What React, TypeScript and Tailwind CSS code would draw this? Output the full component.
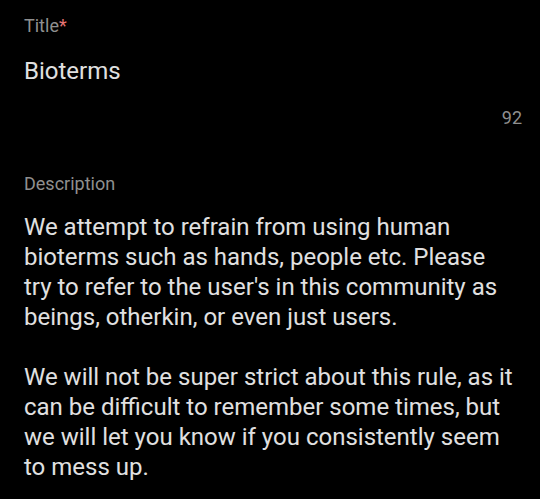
export default function App() {
  return (
    <main
      className="min-h-screen w-full bg-black pl-6 pr-[18px] pt-[14px]"
      style={{ fontFamily: "Roboto, 'Noto Sans', sans-serif" }}
    >
      <section>
        <p className="text-[18px] leading-6 text-[#8f8f8f]">
          Title<span className="text-[#e57373]">*</span>
        </p>
        <p className="mt-[19px] text-[24px] leading-[28px] text-[#e0e0e0]">Bioterms</p>
        <p className="mt-[21px] text-right text-[18px] leading-6 text-[#8f8f8f]">92</p>
      </section>

      <section className="mt-[42px]">
        <p className="text-[18px] leading-6 text-[#8f8f8f]">Description</p>
        <div className="mt-[16px] pr-[6px] text-[24px] leading-[30px] text-[#e0e0e0]">
          <p>
            We attempt to refrain from using human bioterms such as hands, people etc. Please try
            to refer to the user's in this community as beings, otherkin, or even just users.
          </p>
          <p className="mt-[30px]">
            We will not be super strict about this rule, as it can be difficult to remember some
            times, but we will let you know if you consistently seem to mess up.
          </p>
        </div>
      </section>
    </main>
  );
}
